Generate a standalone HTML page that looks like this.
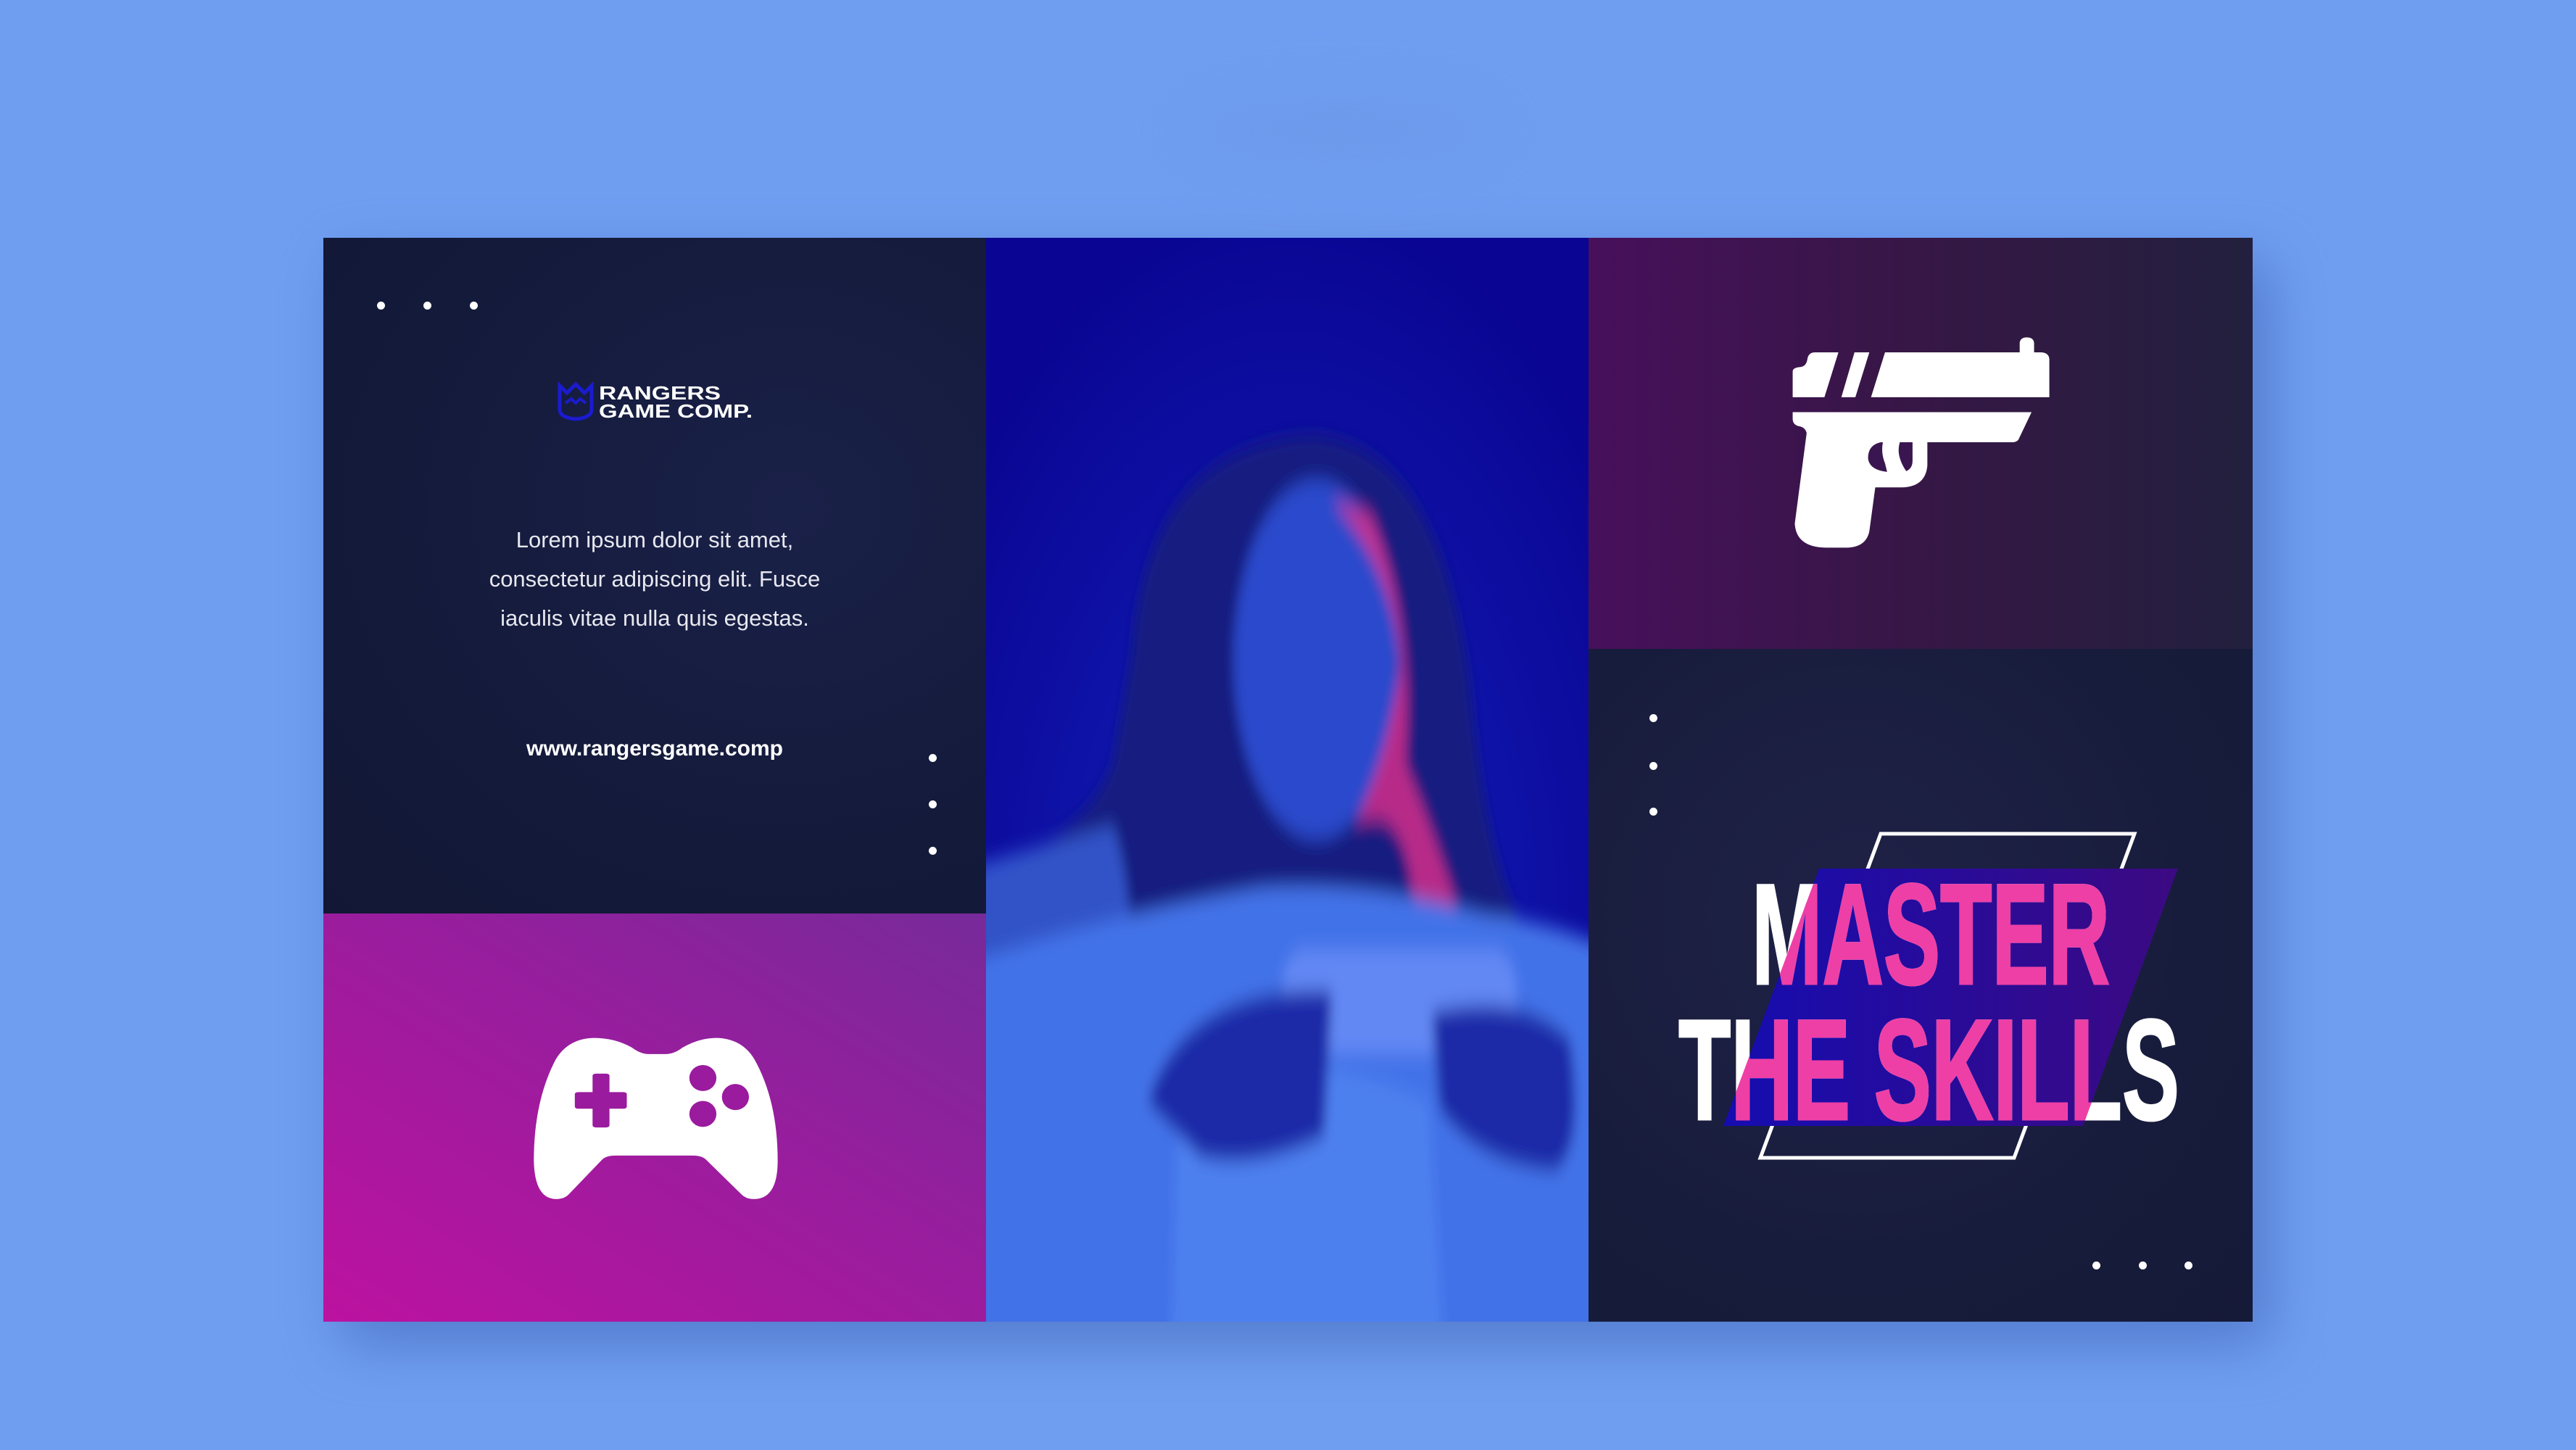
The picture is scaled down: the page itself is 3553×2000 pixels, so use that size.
<!DOCTYPE html>
<html><head><meta charset="utf-8">
<style>
html,body{margin:0;padding:0}
body{width:3553px;height:2000px;background:#6f9ef1;position:relative;overflow:hidden;font-family:"Liberation Sans",sans-serif}
.abs{position:absolute}
.smudge{left:1620px;top:130px;width:460px;height:100px;border-radius:50%;background:#6c96e6;filter:blur(40px);opacity:.6}
.shadow{left:470px;top:360px;width:2661px;height:1495px;background:#3d5fb0;filter:blur(40px);opacity:.55}
.p1{left:446px;top:328px;width:914px;height:932px;background:radial-gradient(ellipse at 70% 40%,#1a2148 0%,#141a3a 60%,#111734 100%)}
.p2{left:446px;top:1260px;width:914px;height:563px;background:linear-gradient(to top right,#bc12a0 0%,#9c1c9e 50%,#772a9a 100%)}
.p3{left:1360px;top:328px;width:831px;height:1495px;background:#0a0592;overflow:hidden}
.p4{left:2191px;top:328px;width:916px;height:567px;background:linear-gradient(to right,#47105b 0%,#361745 50%,#22203e 100%)}
.p5{left:2191px;top:895px;width:916px;height:928px;background:radial-gradient(ellipse at 40% 40%,#1f2246 0%,#181c3c 60%,#151a38 100%)}
.dot{position:absolute;width:11px;height:11px;border-radius:50%;background:#fff}
.lorem{left:446px;width:914px;top:718px;text-align:center;color:#e8e8f0;font-size:31px;line-height:54px}
.url{left:446px;width:914px;top:1016px;text-align:center;color:#fff;font-size:30px;font-weight:bold}
</style></head><body>
<div class="abs smudge"></div>
<div class="abs shadow"></div>
<div class="abs p1"></div>
<div class="abs p2">
<svg width="914" height="563" viewBox="0 0 1568 1568" preserveAspectRatio="none">
<path fill="#fff" d="M770 540 L810 540 Q830 540 850 515 Q890 478 930 478 Q990 480 1020 560 Q1075 720 1075 950 Q1075 1095 1020 1097 Q1000 1097 990 1080 L905 945 Q895 930 875 930 L690 930 Q670 930 660 945 L580 1080 Q570 1097 550 1097 Q500 1095 498 950 Q498 720 550 560 Q580 480 640 478 Q690 478 730 515 Q750 540 770 540 Z"/>
<g fill="#9a1b9e">
<rect x="637" y="615" width="40" height="207" rx="8"/>
<rect x="595" y="686" width="123" height="64" rx="8"/>
<ellipse cx="898" cy="632" rx="32" ry="50"/>
<ellipse cx="975" cy="705" rx="32" ry="50"/>
<ellipse cx="898" cy="770" rx="32" ry="50"/>
</g></svg>
</div>
<div class="abs p3">
<svg width="831" height="1495" viewBox="0 0 1568 1568" preserveAspectRatio="none">
<defs><filter id="b" x="-20%" y="-20%" width="140%" height="140%"><feGaussianBlur stdDeviation="14"/></filter>
<radialGradient id="bg" cx="50%" cy="65%" r="70%"><stop offset="0" stop-color="#1422c0"/><stop offset="1" stop-color="#0a0592"/></radialGradient></defs>
<rect width="1568" height="1568" fill="url(#bg)"/>
<g filter="url(#b)">
<path fill="#151c80" d="M380 600 Q420 300 850 285 Q1180 300 1260 650 Q1300 900 1400 1000 L1700 1200 L1700 1700 L-100 1700 L-100 950 Q250 880 330 760 Z"/>
<path fill="#3a62d8" d="M-100 920 Q200 870 330 850 Q420 1000 330 1250 L-100 1300 Z" opacity=".8"/>
<ellipse cx="860" cy="610" rx="215" ry="260" fill="#2a48cc"/>
<path fill="#e0308a" d="M900 380 Q1060 480 1080 620 Q1040 760 960 850 Q1100 800 1120 1000 Q1200 1030 1260 1030 Q1180 880 1090 760 Q1120 560 1000 400 Z" opacity=".8"/>
<path fill="#4272e8" d="M-100 1060 Q300 980 720 940 Q1000 930 1300 980 Q1500 990 1700 1050 L1700 1700 L-100 1700 Z"/>
<path fill="#5286f2" d="M500 1250 Q800 1150 1150 1250 L1200 1700 L480 1700 Z" opacity=".7"/>
<rect x="770" y="1030" width="610" height="150" rx="60" fill="#6288f4"/>
<path fill="#1e2aa8" d="M420 1250 Q520 1080 900 1090 L880 1300 Q700 1350 560 1330 Z"/>
<path fill="#1e2aa8" d="M1160 1120 Q1400 1090 1520 1160 Q1560 1320 1480 1350 Q1280 1340 1180 1260 Z"/>
</g>
</svg>
</div>
<div class="abs p4">
<svg width="916" height="567" viewBox="0 0 1568 1568" preserveAspectRatio="none">
<g fill="#fff">
<path d="M482 608 L482 510 Q482 495 500 493 Q515 490 517 460 Q520 437 535 437 L590 437 L557 608 Z"/>
<path d="M628 437 L663 437 L630 608 L597 608 Z"/>
<path d="M700 437 L1018 437 L1018 400 Q1020 380 1035 380 Q1050 380 1052 400 L1052 437 L1070 437 Q1088 440 1088 465 L1088 608 L667 608 Z"/>
<path d="M482 665 L1046 665 L1015 770 Q1010 780 1000 780 L800 780 L800 870 Q795 950 740 952 L677 952 L663 1120 Q655 1180 610 1182 L560 1182 Q490 1180 487 1090 L515 745 Q512 722 495 718 Q482 712 482 690 Z"/>
</g>
<g fill="#3a1650">
<path d="M690 780 Q660 790 660 840 Q662 885 705 893 L700 860 Q690 820 695 780 Z"/>
<path d="M735 780 Q725 830 750 890 Q765 880 765 850 L765 780 Z"/>
</g></svg>
</div>
<div class="abs p5"></div>

<svg class="abs" style="left:760px;top:520px" width="300" height="70" viewBox="760 520 300 70">
<path d="M772 532 L782 542 L794 530 L806 542 L816 532 L816 565 Q816 576 794 578 Q772 576 772 565 Z" fill="none" stroke="#1b1bd0" stroke-width="5"/>
<path d="M780 556 L788 550 L794 556 L800 550 L808 556" fill="none" stroke="#1b1bd0" stroke-width="4"/>
<text x="826" y="551" fill="#fff" font-family="Liberation Sans" font-weight="bold" font-size="26" textLength="168" lengthAdjust="spacingAndGlyphs">RANGERS</text>
<text x="826" y="576" fill="#fff" font-family="Liberation Sans" font-weight="bold" font-size="26" textLength="212" lengthAdjust="spacingAndGlyphs">GAME COMP.</text>
</svg>

<div class="abs lorem">Lorem ipsum dolor sit amet,<br>consectetur adipiscing elit. Fusce<br>iaculis vitae nulla quis egestas.</div>
<div class="abs url">www.rangersgame.comp</div>

<div class="dot" style="left:520px;top:416px"></div>
<div class="dot" style="left:584px;top:416px"></div>
<div class="dot" style="left:648px;top:416px"></div>
<div class="dot" style="left:1281px;top:1040px"></div>
<div class="dot" style="left:1281px;top:1104px"></div>
<div class="dot" style="left:1281px;top:1168px"></div>
<div class="dot" style="left:2275px;top:985px"></div>
<div class="dot" style="left:2275px;top:1051px"></div>
<div class="dot" style="left:2275px;top:1114px"></div>
<div class="dot" style="left:2886px;top:1740px"></div>
<div class="dot" style="left:2950px;top:1740px"></div>
<div class="dot" style="left:3013px;top:1740px"></div>

<svg class="abs" style="left:0;top:0" width="3553" height="2000">
<defs>
<linearGradient id="pg" x1="0" x2="1"><stop offset="0" stop-color="#150cb0"/><stop offset="1" stop-color="#3c0a82"/></linearGradient>
<clipPath id="cp"><polygon points="2509,1198 3004,1198 2873,1553 2377,1553"/></clipPath>
</defs>
<polygon points="2594,1150 2944,1150 2778,1597 2428,1597" fill="none" stroke="#fff" stroke-width="5"/>
<polygon points="2509,1198 3004,1198 2873,1553 2377,1553" fill="url(#pg)"/>
<g font-family="Liberation Sans Narrow, Liberation Sans, sans-serif" font-weight="bold" font-size="198" stroke-width="3">
<text x="2416" y="1357" fill="#fff" stroke="#fff" textLength="494" lengthAdjust="spacingAndGlyphs">MASTER</text>
<text x="2315" y="1544" fill="#fff" stroke="#fff" textLength="691" lengthAdjust="spacingAndGlyphs">THE SKILLS</text>
<g clip-path="url(#cp)" fill="#ee3fa6" stroke="#ee3fa6">
<text x="2416" y="1357" textLength="494" lengthAdjust="spacingAndGlyphs">MASTER</text>
<text x="2315" y="1544" textLength="691" lengthAdjust="spacingAndGlyphs">THE SKILLS</text>
</g></g>
</svg>
</body></html>
